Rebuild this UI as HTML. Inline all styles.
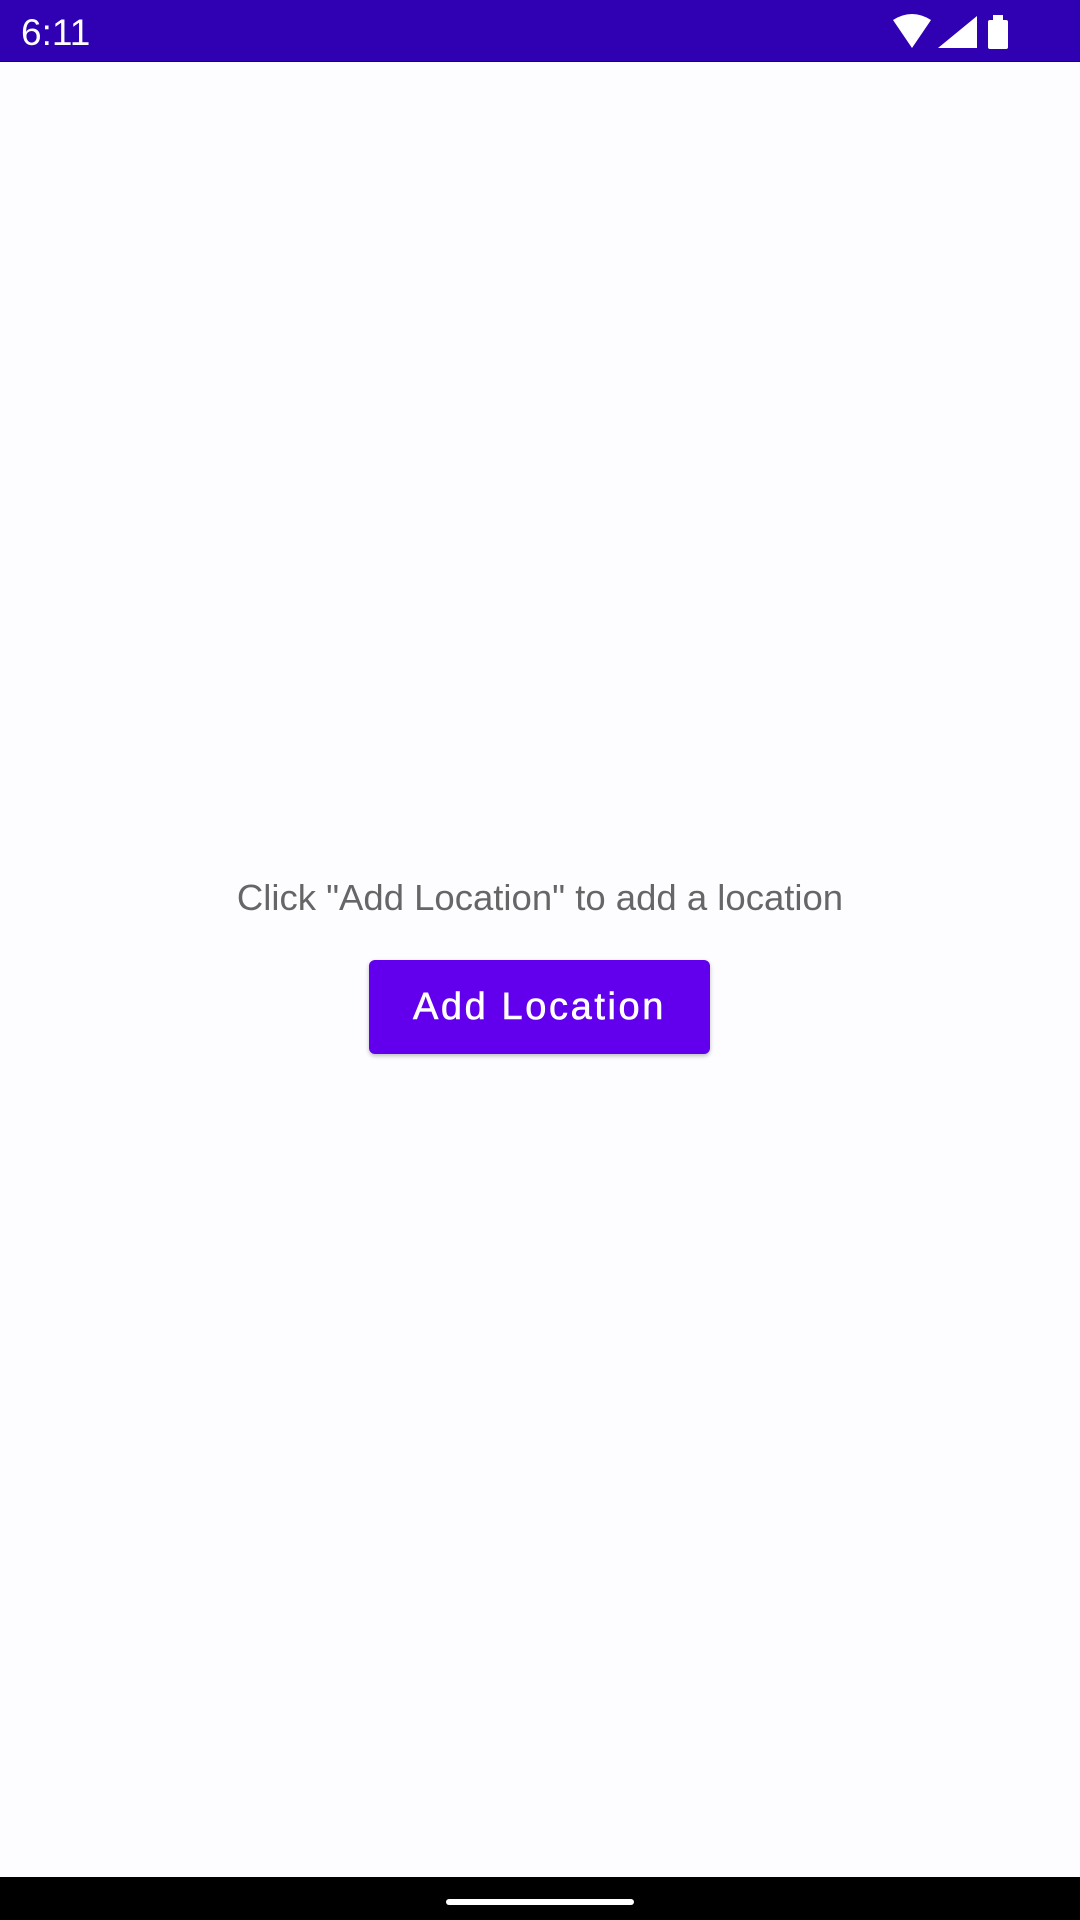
<!DOCTYPE html>
<html><head><meta charset="utf-8"><style>
html,body{margin:0;padding:0;width:1080px;height:1920px;background:#fdfcff;overflow:hidden;font-family:"Liberation Sans",sans-serif;position:relative}
.sb{position:absolute;left:0;top:0;width:1080px;height:61px;background:#3000b3;border-bottom:1px solid #1a0060}
.time{position:absolute;left:21px;top:12px;color:#fff;font-size:37px}
.msg{position:absolute;left:0;width:1080px;top:877px;text-align:center;color:#666;font-size:36.5px}
.btn{position:absolute;left:369px;top:960px;width:341px;height:94px;background:#6200ee;border-radius:6px;box-shadow:0 2px 4px rgba(0,0,0,.25);color:#fff;font-size:38px;letter-spacing:2.6px;text-align:center;line-height:94px;-webkit-text-stroke:0.6px #fff}
.nav{position:absolute;left:0;top:1877px;width:1080px;height:43px;background:#000}
.pill{position:absolute;left:446px;top:1899px;width:188px;height:6px;border-radius:3px;background:#fff}
</style></head><body>
<div class="sb">
<div class="time">6:11</div>
<svg style="position:absolute;left:890px;top:14px" width="125" height="36" viewBox="0 0 125 36">
<path d="M3 6 Q22 -6 41 6 L22 34 Z" fill="#fff"/>
<path d="M48 34 L87 34 L87 2 Z" fill="#fff"/>
<rect x="98" y="6" width="20" height="29" rx="2" fill="#fff"/>
<rect x="103" y="1" width="10" height="6" fill="#fff"/>
</svg>
</div>
<div class="msg">Click "Add Location" to add a location</div>
<div class="btn">Add Location</div>
<div class="nav"></div>
<div class="pill"></div>
</body></html>
